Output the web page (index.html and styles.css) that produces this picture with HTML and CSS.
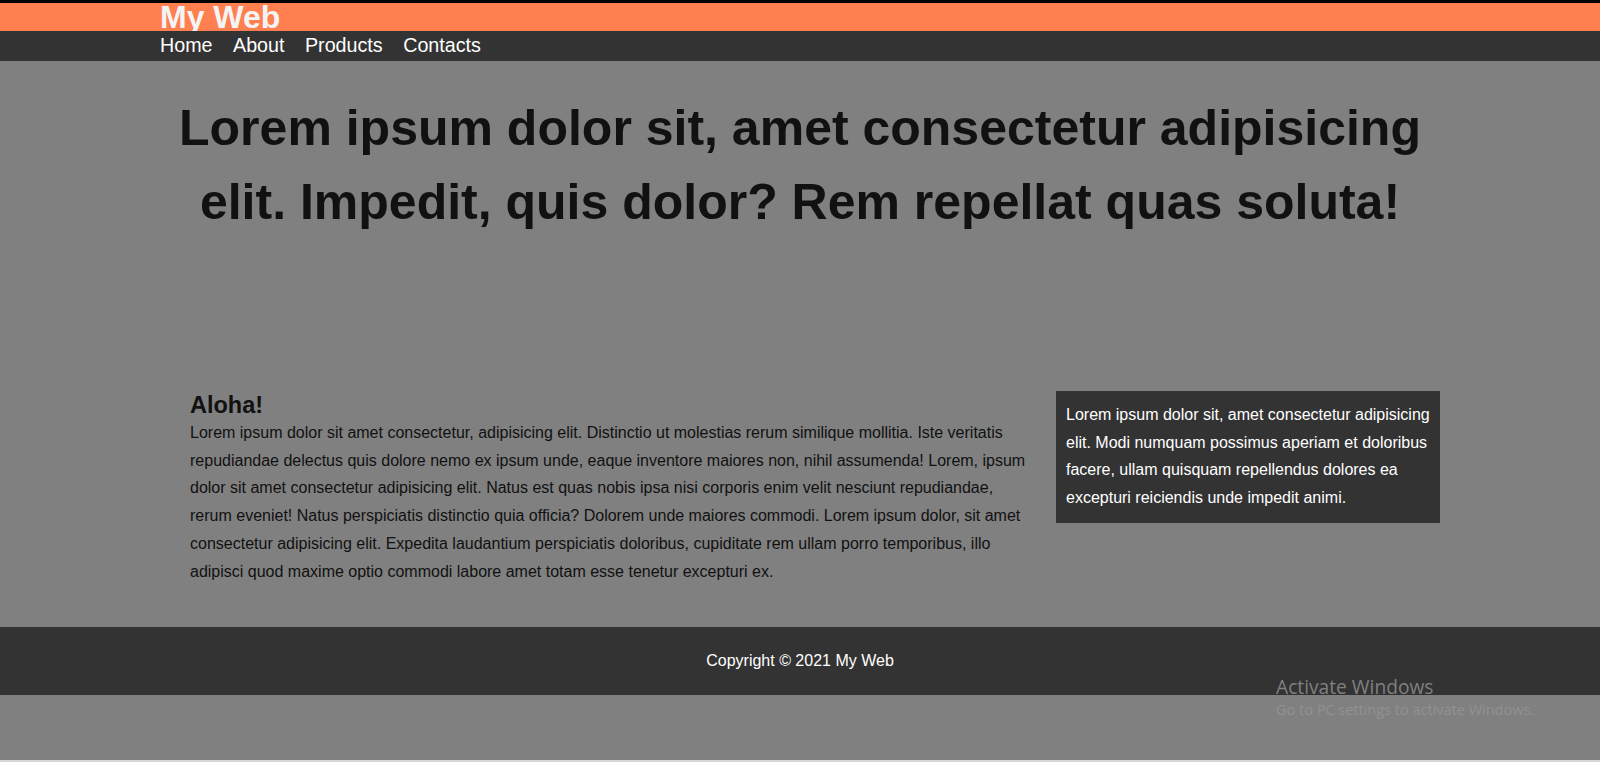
FILE: index.html
```html
<!DOCTYPE html>
<html lang="en">
<head>
<meta charset="utf-8">
<title>My Web</title>
<link rel="stylesheet" href="styles.css">
</head>
<body>
<div class="topline"></div>
<header class="brand">
  <div class="container">
    <h1 class="logo">My Web</h1>
  </div>
</header>
<nav class="navbar">
  <div class="container">
    <ul class="menu">
      <li><a href="#">Home</a></li>
      <li><a href="#">About</a></li>
      <li><a href="#">Products</a></li>
      <li><a href="#">Contacts</a></li>
    </ul>
  </div>
</nav>
<section class="showcase">
  <div class="container">
    <h1 class="headline">Lorem ipsum dolor sit, amet consectetur adipisicing elit. Impedit, quis dolor? Rem repellat quas soluta!</h1>
  </div>
</section>
<main class="container main">
  <article class="content">
    <h2 class="title">Aloha!</h2>
    <p class="text">Lorem ipsum dolor sit amet consectetur, adipisicing elit. Distinctio ut molestias rerum similique mollitia. Iste veritatis repudiandae delectus quis dolore nemo ex ipsum unde, eaque inventore maiores non, nihil assumenda! Lorem, ipsum dolor sit amet consectetur adipisicing elit. Natus est quas nobis ipsa nisi corporis enim velit nesciunt repudiandae, rerum eveniet! Natus perspiciatis distinctio quia officia? Dolorem unde maiores commodi. Lorem ipsum dolor, sit amet consectetur adipisicing elit. Expedita laudantium perspiciatis doloribus, cupiditate rem ullam porro temporibus, illo adipisci quod maxime optio commodi labore amet totam esse tenetur excepturi ex.</p>
  </article>
  <aside class="sidebar">
    <div class="box">
      <p class="box-text">Lorem ipsum dolor sit, amet consectetur adipisicing elit. Modi numquam possimus aperiam et doloribus facere, ullam quisquam repellendus dolores ea excepturi reiciendis unde impedit animi.</p>
    </div>
  </aside>
</main>
<footer class="footer">
  <p class="copy">Copyright &copy; 2021 My Web</p>
</footer>
<div class="watermark">
  <div class="wm-title">Activate Windows</div>
  <div class="wm-sub">Go to PC settings to activate Windows.</div>
</div>
<div class="taskbar-edge"></div>
</body>
</html>
```
FILE: styles.css
```css
* {
  box-sizing: border-box;
}

html, body {
  margin: 0;
  padding: 0;
}

body {
  background: #808080;
  font-family: "Liberation Sans", Arial, Helvetica, sans-serif;
  color: #111;
  min-height: 762px;
}

.container {
  width: 80%;
  margin: 0 auto;
}

.topline {
  height: 3px;
  background: #000;
}

.brand {
  background: #ff7f50;
  height: 28px;
  overflow: hidden;
}

.logo {
  margin: 0;
  font-size: 32px;
  line-height: 28px;
  font-weight: bold;
  color: #f4f4f4;
}

.navbar {
  background: #333;
  height: 30px;
}

.menu {
  list-style: none;
  margin: 0;
  padding: 0;
  display: flex;
  gap: 20.5px;
}

.menu a {
  color: #fff;
  text-decoration: none;
  font-size: 19.7px;
  line-height: 28px;
  display: block;
}

.showcase {
  height: 330px;
  padding-top: 30px;
  text-align: center;
}

.headline {
  margin: 0;
  font-size: 50px;
  line-height: 74px;
  font-weight: bold;
  color: #111;
}

.main {
  display: grid;
  grid-template-columns: 70% 30%;
  align-items: start;
  padding-bottom: 41.5px;
}

.content {
  padding: 1px 30px 0 30px;
}

.title {
  margin: 0;
  font-size: 23.5px;
  line-height: 27px;
  font-weight: bold;
  color: #111;
}

.text {
  margin: 0;
  font-size: 16px;
  line-height: 27.7px;
  color: #111;
}

.box {
  background: #333;
  color: #fff;
  padding: 10px 10px 11px;
}

.box-text {
  margin: 0;
  font-size: 16px;
  line-height: 27.7px;
}

.footer {
  background: #333;
  color: #fff;
  height: 68px;
  padding-top: 25px;
  text-align: center;
}

.copy {
  margin: 0;
  font-size: 16px;
  line-height: 18px;
}

.watermark {
  position: absolute;
  left: 1276px;
  top: 673px;
  font-family: "Open Sans", "Noto Sans", sans-serif;
  color: rgba(150, 150, 150, 0.8);
}

.wm-title {
  font-size: 19.2px;
  line-height: 27px;
}

.wm-sub {
  font-size: 14.5px;
  line-height: 20px;
}

.taskbar-edge {
  position: fixed;
  left: 0;
  right: 0;
  bottom: 0;
  height: 2px;
  background: #d6d6d6;
}
```
